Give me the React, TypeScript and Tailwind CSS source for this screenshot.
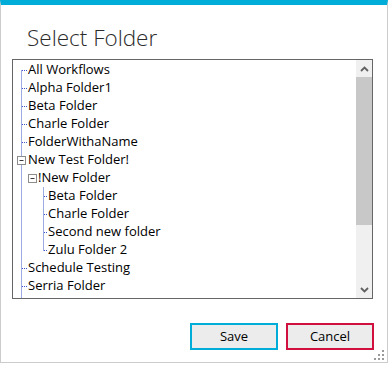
const rows: { label: string; level: number; box?: boolean }[] = [
  { label: "All Workflows", level: 0 },
  { label: "Alpha Folder1", level: 0 },
  { label: "Beta Folder", level: 0 },
  { label: "Charle Folder", level: 0 },
  { label: "FolderWithaName", level: 0 },
  { label: "New Test Folder!", level: 0, box: true },
  { label: "!New Folder", level: 1, box: true },
  { label: "Beta Folder", level: 2 },
  { label: "Charle Folder", level: 2 },
  { label: "Second new folder", level: 2 },
  { label: "Zulu Folder 2", level: 2 },
  { label: "Schedule Testing", level: 0 },
  { label: "Serria Folder", level: 0 },
];

const indent = ["pl-[15px]", "pl-[25px]", "pl-[35px]"];

function TreeLines() {
  const cy = (i: number) => 10.5 + 18 * i;
  const dot = "#3a56c8";
  return (
    <svg className="absolute inset-0 pointer-events-none" width="343" height="238">
      <line x1="8.5" y1={cy(0)} x2="8.5" y2="238" stroke={dot} strokeDasharray="1 1" />
      {rows.map((r, i) =>
        r.level === 0 && !r.box ? (
          <line key={i} x1="9" y1={cy(i)} x2="15" y2={cy(i)} stroke={dot} strokeDasharray="1 1" />
        ) : null
      )}
      <line x1="30.5" y1={cy(7) - 9} x2="30.5" y2={cy(10)} stroke={dot} strokeDasharray="1 1" />
      {[7, 8, 9, 10].map((i) => (
        <line key={i} x1="31" y1={cy(i)} x2="35" y2={cy(i)} stroke={dot} strokeDasharray="1 1" />
      ))}
      {[
        { x: 4, i: 5 },
        { x: 15, i: 6 },
      ].map(({ x, i }) => (
        <g key={i}>
          <rect x={x + 0.5} y={cy(i) - 4} width="8" height="8" fill="#fff" stroke="#8c8c8c" />
          <line x1={x + 2.5} y1={cy(i)} x2={x + 6.5} y2={cy(i)} stroke="#3a3a3a" />
        </g>
      ))}
    </svg>
  );
}

function Chevron({ up }: { up?: boolean }) {
  return (
    <svg width="9" height="6" viewBox="0 0 9 6">
      <polyline
        points={up ? "1,5 4.5,1.5 8,5" : "1,1 4.5,4.5 8,1"}
        fill="none"
        stroke="#606060"
        strokeWidth="1.8"
      />
    </svg>
  );
}

export default function App() {
  return (
    <div className="relative w-[391px] h-[368px] bg-white overflow-hidden" style={{ fontFamily: '"Open Sans", "Noto Sans", sans-serif' }}>
      <div className="w-[388px] h-[363px] flex flex-col border-t-[5px] border-t-[#00acd8] border-x border-b border-[#cccccc] bg-white relative">
        <div className="pl-[26px] pt-[18px] h-[54px] text-[22.5px] leading-[30px] font-light text-[#2b2b2b]">
          Select Folder
        </div>
        <div className="ml-[11px] w-[361px] h-[240px] border border-[#666666] flex">
          <div className="relative flex-1 pt-[1px] overflow-hidden">
            <TreeLines />
            {rows.map((r, i) => (
              <div key={i} className={`h-[18px] flex items-center ${indent[r.level]} text-[13px] text-black whitespace-nowrap`}>
                {r.label}
              </div>
            ))}
          </div>
          <div className="w-[16px] flex flex-col bg-[#f0f0f0]">
            <div className="h-[17px] flex items-center justify-center">
              <Chevron up />
            </div>
            <div className="h-[148px] bg-[#c8c8c8]" />
            <div className="flex-1" />
            <div className="h-[17px] flex items-center justify-center">
              <Chevron />
            </div>
          </div>
        </div>
        <div className="flex justify-end gap-[8px] pr-[13px] mt-[24px]">
          <button className="w-[88px] h-[27px] border-2 border-[#00acd8] bg-[#ececec] text-[13px] text-black">Save</button>
          <button className="w-[88px] h-[27px] border-2 border-[#d0103f] bg-[#ececec] text-[13px] text-black">Cancel</button>
        </div>
        <svg className="absolute right-[2px] bottom-[1px]" width="11" height="11">
          {[
            [8, 0],
            [4, 4],
            [8, 4],
            [0, 8],
            [4, 8],
            [8, 8],
          ].map(([x, y], k) => (
            <rect key={k} x={x} y={y} width="2" height="2" fill="#9a9a9a" />
          ))}
        </svg>
      </div>
    </div>
  );
}
